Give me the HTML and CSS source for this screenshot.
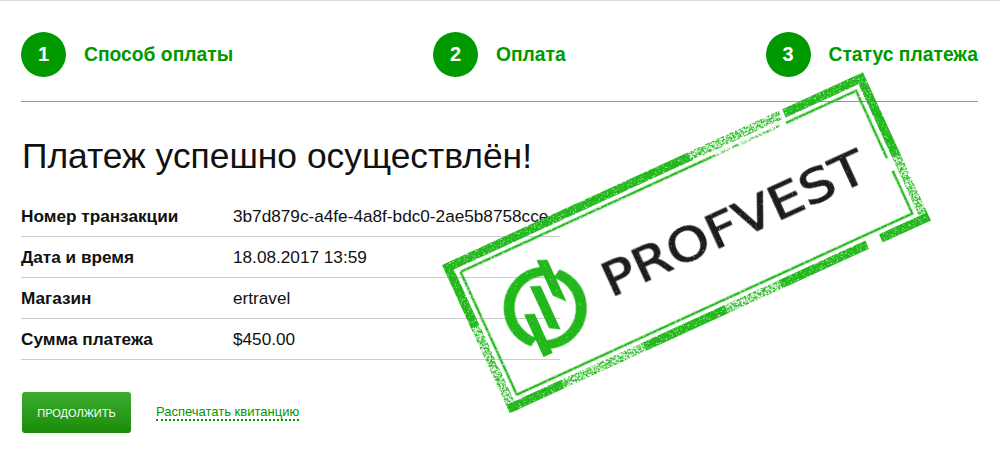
FILE: index.html
```html
<!DOCTYPE html>
<html lang="ru">
<head>
  <meta charset="UTF-8">
  <meta name="viewport" content="width=device-width, initial-scale=1.0">
  <title>Статус платежа</title>
  <link rel="stylesheet" href="styles.css">
</head>
<body>
  <div class="container">
    <div class="steps">
      <div class="step"><span class="step-num">1</span><span class="step-name">Способ оплаты</span></div>
      <div class="step"><span class="step-num">2</span><span class="step-name">Оплата</span></div>
      <div class="step"><span class="step-num">3</span><span class="step-name">Статус платежа</span></div>
    </div>

    <h1 class="title">Платеж успешно осуществлён!</h1>

    <div class="details">
      <div class="row"><span class="row-label">Номер транзакции</span><span>3b7d879c-a4fe-4a8f-bdc0-2ae5b8758cce</span></div>
      <div class="row"><span class="row-label">Дата и время</span><span>18.08.2017 13:59</span></div>
      <div class="row"><span class="row-label">Магазин</span><span>ertravel</span></div>
      <div class="row"><span class="row-label">Сумма платежа</span><span>$450.00</span></div>
    </div>

    <div class="actions">
      <button type="button" class="btn">ПРОДОЛЖИТЬ</button>
      <a href="#" class="print-link">Распечатать квитанцию</a>
    </div>
  </div>

  <!-- stamp over the page -->
  <svg class="stamp" width="1000" height="456" viewBox="0 0 1000 456">
    <defs>
      <filter id="worn" x="-5%" y="-5%" width="110%" height="110%" color-interpolation-filters="sRGB">
        <feTurbulence type="fractalNoise" baseFrequency="0.7" numOctaves="3" seed="7" result="noise"/>
        <feColorMatrix in="noise" type="matrix" values="0 0 0 0 0  0 0 0 0 0  0 0 0 0 0  0 0 0 -5 4" result="specks"/>
        <feComposite in="SourceGraphic" in2="specks" operator="in"/>
      </filter>
      <filter id="worn-heavy" x="-5%" y="-5%" width="110%" height="110%" color-interpolation-filters="sRGB">
        <feTurbulence type="fractalNoise" baseFrequency="0.6" numOctaves="3" seed="11" result="noise"/>
        <feColorMatrix in="noise" type="matrix" values="0 0 0 0 0  0 0 0 0 0  0 0 0 0 0  0 0 0 -6 3.5" result="specks"/>
        <feComposite in="SourceGraphic" in2="specks" operator="in"/>
      </filter>
      <filter id="worn-light" x="-5%" y="-5%" width="110%" height="110%" color-interpolation-filters="sRGB">
        <feTurbulence type="fractalNoise" baseFrequency="0.8" numOctaves="2" seed="3" result="noise"/>
        <feColorMatrix in="noise" type="matrix" values="0 0 0 0 0  0 0 0 0 0  0 0 0 0 0  0 0 0 -4 3.8" result="specks"/>
        <feComposite in="SourceGraphic" in2="specks" operator="in"/>
      </filter>
    </defs>
    <g transform="translate(442 265) rotate(-24.6)">
      <g filter="url(#worn)">
        <!-- outer band -->
        <path class="band" d="M0 4.5H270M374 4.5H463M458.5 0V90M0 158.5H60M150 158.5H240M300 158.5H395M410 158.5H463M4.5 0V70"/>
        <!-- inner line -->
        <path class="line" d="M14 14H290M372 14H449V88M449 102V149H14V14"/>
      </g>
      <g filter="url(#worn-heavy)">
        <path class="band" d="M270 4.5H370M458.5 90V163M60 158.5H150M240 158.5H300M4.5 70V163"/>
        <path class="line" d="M290 14H365"/>
      </g>
      <!-- logo -->
      <g class="logo" transform="translate(76 82)" filter="url(#worn-light)">
        <path d="M12 -39.5A41 41 0 0 0 -29 29L-20 24A32 32 0 0 1 12 -30Z"/>
        <path d="M-12 39.5A41 41 0 0 0 29 -29L20 -24A32 32 0 0 1 -12 30Z"/>
        <path d="M12 -47L22 -43V3L12 -8Z"/>
        <path d="M-5 -26L5 -22V26L-5 20Z"/>
        <path d="M-22 -3L-12 1V44H-22Z"/>
      </g>
      <text class="stamp-text" x="140" y="100" textLength="285" lengthAdjust="spacingAndGlyphs" filter="url(#worn-light)">PROFVEST</text>
    </g>
  </svg>
</body>
</html>
```

FILE: styles.css
```css
body {
  margin: 0;
  padding: 0;
  background: #fff;
  border-top: 1px solid #ddd;
  font-family: "Liberation Sans", Arial, sans-serif;
  color: #111;
  position: relative;
  height: 455px;
  overflow: hidden;
}

.container {
  padding: 31px 22px 0 21px;
}

.steps {
  display: flex;
  justify-content: space-between;
  align-items: center;
  padding-bottom: 24px;
  border-bottom: 1px solid #999;
}

.step {
  display: flex;
  align-items: center;
  gap: 18px;
}

.step-num {
  width: 45px;
  height: 45px;
  border-radius: 50%;
  background: #090;
  color: #fff;
  font-size: 20px;
  font-weight: bold;
  display: flex;
  align-items: center;
  justify-content: center;
}

.step-name {
  color: #090;
  font-size: 19.3px;
  font-weight: bold;
}

.title {
  margin: 32px 0 0 1px;
  font-size: 35.4px;
  line-height: 44px;
  font-weight: normal;
}

.details {
  width: 539px;
  margin-top: 18px;
}

.row {
  display: flex;
  height: 40px;
  align-items: center;
  border-bottom: 1px solid #ccc;
  font-size: 17.2px;
}

.row-label {
  width: 212px;
  font-weight: bold;
}

.actions {
  display: flex;
  align-items: center;
  gap: 25px;
  margin-top: 32px;
  padding-left: 1px;
}

.btn {
  width: 109px;
  height: 41px;
  padding: 0;
  border: none;
  border-radius: 3px;
  background: linear-gradient(#3cab30, #1b8c08);
  color: #fff;
  font-family: inherit;
  font-size: 11px;
  cursor: pointer;
}

.print-link {
  color: #090;
  font-size: 13px;
  text-decoration: none;
  border-bottom: 2px dotted #090;
}

.stamp {
  position: absolute;
  top: -1px;
  left: 0;
  pointer-events: none;
}

.band {
  fill: none;
  stroke: #22b81c;
  stroke-width: 9;
}

.line {
  fill: none;
  stroke: #22b81c;
  stroke-width: 2.5;
}

.logo path {
  fill: #22b81c;
}

.stamp-text {
  font-family: "DejaVu Sans", sans-serif;
  font-size: 47px;
  fill: #1c1c1c;
  stroke: #1c1c1c;
  stroke-width: 1px;
}
```
